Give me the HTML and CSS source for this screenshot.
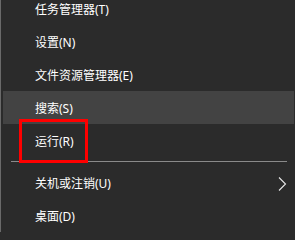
FILE: index.html
```html
<!DOCTYPE html>
<html lang="zh-CN">

<head>
    <meta charset="UTF-8">
    <meta name="viewport" content="width=device-width, initial-scale=1.0">
    <title>Win+X</title>
    <link rel="stylesheet" href="styles.css">
</head>

<body>
    <div class="menu">
        <div class="item">任务管理器(T)</div>
        <div class="item">设置(N)</div>
        <div class="item">文件资源管理器(E)</div>
        <div class="item hover">搜索(S)</div>
        <div class="item run">
            运行(R)
            <span class="mark"></span>
        </div>
        <div class="sep"></div>
        <div class="item sub">
            关机或注销(U)
            <svg class="arrow" width="9" height="14" viewBox="0 0 9 14">
                <polyline points="1,0.5 7.5,7 1,13.5" fill="none" stroke="#e8e8e8" stroke-width="1.1" />
            </svg>
        </div>
        <div class="item">桌面(D)</div>
    </div>
</body>

</html>
```

FILE: styles.css
```css
html,
body {
    margin: 0;
    height: 100%;
    background: #2b2b2b;
    overflow: hidden;
}

.menu {
    height: 100%;
    border-left: 1px solid #6a6a6a;
    padding-left: 2px;
    font-family: "Noto Sans", "Noto Sans CJK SC", sans-serif;
    font-size: 12px;
    color: #fff;
}

.item {
    height: 33px;
    display: flex;
    align-items: center;
    padding-left: 32px;
    position: relative;
}

.item:first-child {
    margin-top: -8px;
}

.hover {
    background: #434343;
    margin-right: 1px;
}

/* 红框标注 */
.mark {
    position: absolute;
    left: 16px;
    top: -5px;
    width: 63px;
    height: 38px;
    border: 3px solid #f00;
}

.sep {
    height: 1px;
    background: #8a8a8a;
    margin: 4px 8px 4px 8px;
}

.sub {
    justify-content: space-between;
    padding-right: 8px;
}

.arrow {
    display: block;
    margin-top: 2px;
}
```
